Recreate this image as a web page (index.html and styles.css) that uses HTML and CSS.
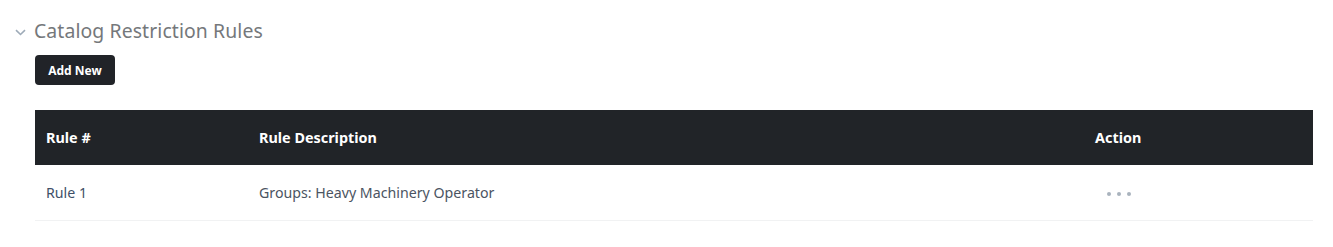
FILE: index.html
```html
<!DOCTYPE html>
<html>
<head>
<meta charset="utf-8">
<link rel="stylesheet" href="styles.css">
</head>
<body>
<section class="panel">
  <div class="panel-head">
    <svg class="chevron" width="11" height="7" viewBox="0 0 11 7"><path d="M1 1.2 L5.5 5.5 L10 1.2" fill="none" stroke="#9eabb8" stroke-width="1.6"/></svg>
    <h2 class="title">Catalog Restriction Rules</h2>
  </div>
  <div class="panel-body">
    <button class="btn">Add New</button>
    <table class="rules">
      <thead>
        <tr><th class="c1">Rule #</th><th class="c2">Rule Description</th><th class="c3">Action</th></tr>
      </thead>
      <tbody>
        <tr>
          <td class="c1"><a class="link">Rule 1</a></td>
          <td class="c2">Groups: Heavy Machinery Operator</td>
          <td class="c3"><span class="dots"><i></i><i></i><i></i></span></td>
        </tr>
      </tbody>
    </table>
  </div>
</section>
</body>
</html>
```
FILE: styles.css
```css
html, body { margin: 0; padding: 0; background: #fff; }
body { font-family: "Noto Sans", "Open Sans", sans-serif; }
.panel { padding: 18px 20px 0 15px; }
.panel-head { display: flex; align-items: center; gap: 8px; height: 24px; }
.chevron { display: block; margin-top: 4px; }
.title { margin: 0; font-size: 19.4px; font-weight: 400; color: #75787b; letter-spacing: 0.1px; }
.panel-body { padding-left: 20px; }
.btn {
  margin-top: 13px; height: 30px; width: 80px; border: 0; border-radius: 4px;
  background: #212328; color: #fff; font-family: "Noto Sans", sans-serif;
  font-weight: 700; font-size: 12px; padding: 0; cursor: pointer;
}
.rules { margin-top: 25px; width: 100%; border-collapse: collapse; table-layout: fixed; }
.rules th { background: #212428; color: #fff; font-weight: 700; font-size: 14.4px; text-align: left; height: 55px; padding: 0 11px; }
.rules td { height: 55px; padding: 0 11px; font-size: 14.2px; color: #4b5462; border-bottom: 1px solid #f1f2f3; }
.rules .c1 { width: 191px; }
.rules .c3 { width: 207px; }
.link { color: #3f5068; }
.dots { display: inline-flex; gap: 6px; margin-left: 12px; vertical-align: middle; }
.dots i { width: 4px; height: 4px; border-radius: 50%; background: #a9b3bd; display: block; }
```
